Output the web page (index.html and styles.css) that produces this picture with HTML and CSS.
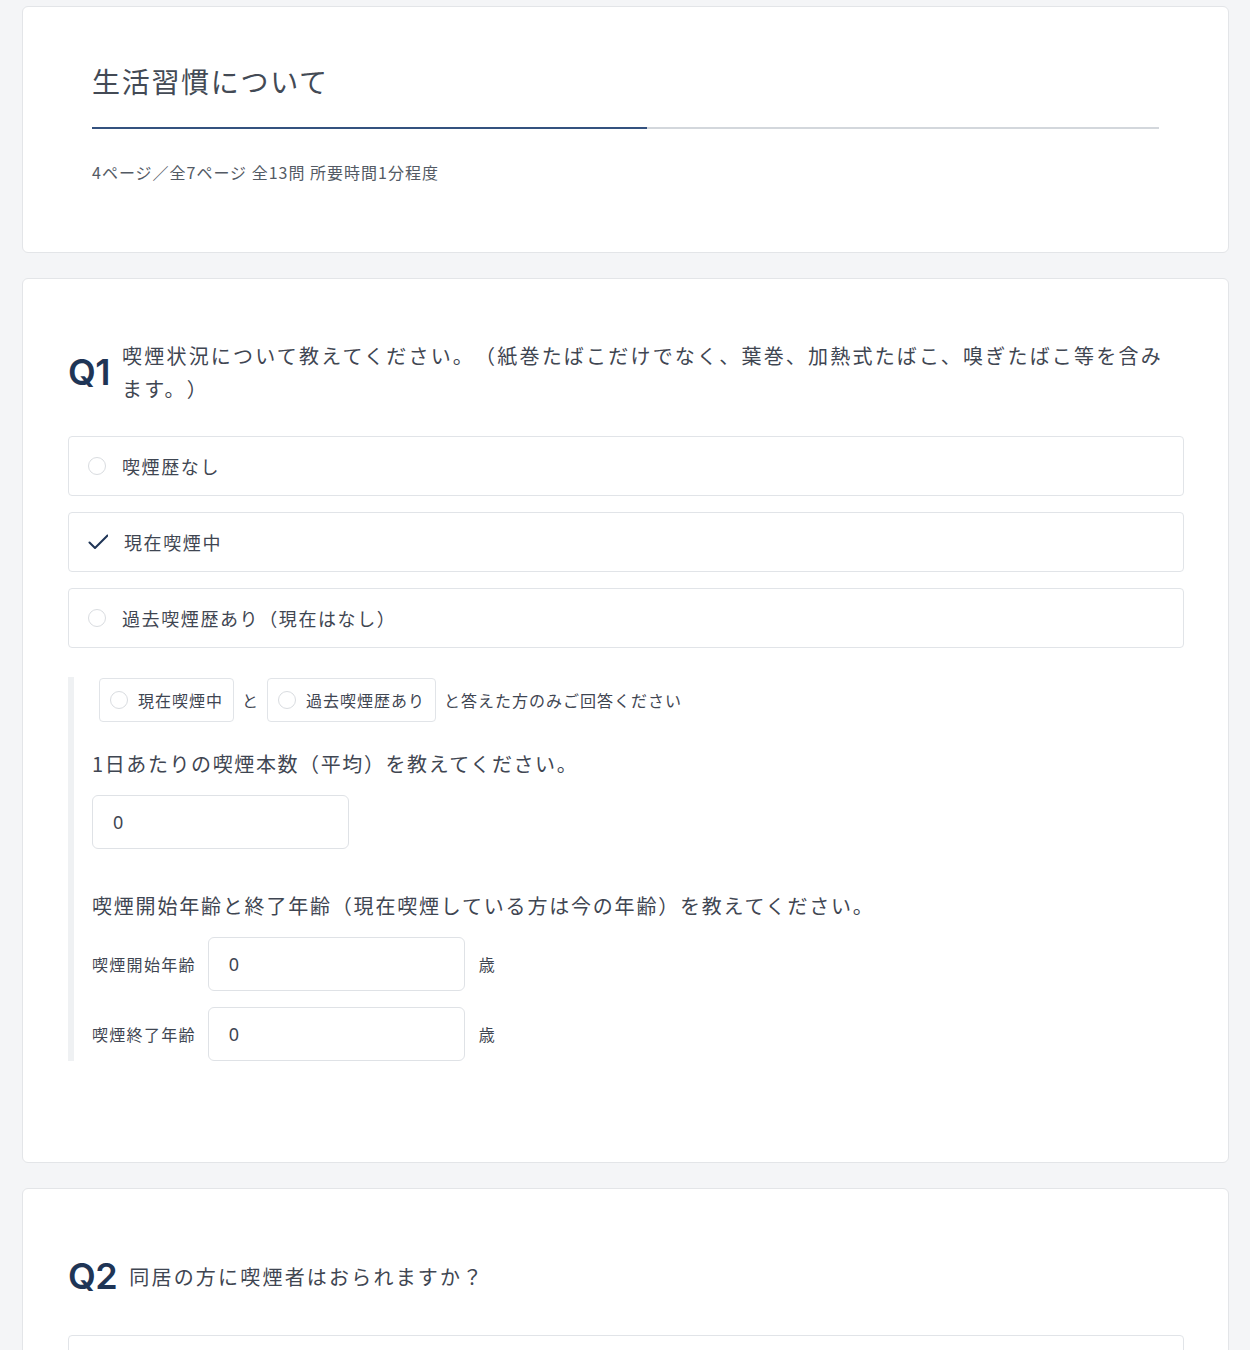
FILE: index.html
```html
<!DOCTYPE html>
<html lang="ja">
<head>
<meta charset="utf-8">
<title>生活習慣について</title>
<link rel="stylesheet" href="styles.css">
</head>
<body>
<main class="page">
  <section class="card card-head">
    <h1 class="title">生活習慣について</h1>
    <div class="progress"><div class="progress-fill" style="width: 52%"></div></div>
    <p class="meta">4ページ／全7ページ 全13問 所要時間1分程度</p>
  </section>

  <section class="card card-q">
    <div class="q-head">
      <span class="q-num">Q1</span>
      <p class="q-text">喫煙状況について教えてください。（紙巻たばこだけでなく、葉巻、加熱式たばこ、嗅ぎたばこ等を含みます。）</p>
    </div>
    <div class="options">
      <div class="option"><span class="radio"></span><span class="opt-label">喫煙歴なし</span></div>
      <div class="option"><svg class="check" viewBox="0 0 20 20" width="20" height="20"><path d="M1.5 10.5 L7 16 L19.5 3.5" fill="none" stroke="#1f3556" stroke-width="2" stroke-linecap="round" stroke-linejoin="round"/></svg><span class="opt-label">現在喫煙中</span></div>
      <div class="option"><span class="radio"></span><span class="opt-label">過去喫煙歴あり（現在はなし）</span></div>
    </div>

    <div class="sub">
      <div class="cond">
        <span class="chip"><span class="radio radio-sm"></span>現在喫煙中</span>
        <span class="cond-text">と</span>
        <span class="chip"><span class="radio radio-sm"></span>過去喫煙歴あり</span>
        <span class="cond-text">と答えた方のみご回答ください</span>
      </div>
      <p class="sub-q">1日あたりの喫煙本数（平均）を教えてください。</p>
      <div class="input">0</div>

      <p class="sub-q sub-q2">喫煙開始年齢と終了年齢（現在喫煙している方は今の年齢）を教えてください。</p>
      <div class="rows">
        <div class="row"><span class="row-label">喫煙開始年齢</span><div class="input">0</div><span class="unit">歳</span></div>
        <div class="row"><span class="row-label">喫煙終了年齢</span><div class="input">0</div><span class="unit">歳</span></div>
      </div>
    </div>
  </section>

  <section class="card card-q">
    <div class="q-head">
      <span class="q-num">Q2</span>
      <p class="q-text">同居の方に喫煙者はおられますか？</p>
    </div>
    <div class="options">
      <div class="option"><span class="radio"></span></div>
    </div>
  </section>
</main>
</body>
</html>
```
FILE: styles.css
```css
html, body {
  margin: 0;
  padding: 0;
}
body {
  background: #f4f5f7;
  font-family: "Noto Sans CJK JP", "Noto Sans", sans-serif;
  color: #3f4652;
  text-spacing-trim: space-all;
}
.page {
  padding: 6px 21px 40px 22px;
  display: flex;
  flex-direction: column;
  gap: 25px;
}
.card {
  background: #ffffff;
  border: 1px solid #e3e5e8;
  border-radius: 6px;
}
.card-head {
  padding: 53px 69px 68px 69px;
}
.title {
  margin: 0;
  font-size: 28px;
  line-height: 42px;
  font-weight: 400;
  letter-spacing: 1.7px;
  color: #434a55;
}
.progress {
  margin-top: 25px;
  height: 2px;
  background: #d3d7dc;
}
.progress-fill {
  height: 2px;
  background: #34527f;
}
.meta {
  margin: 31px 0 0 0;
  font-size: 16px;
  line-height: 24px;
  letter-spacing: 1px;
  color: #535a64;
}
.card-q {
  padding: 60px 44px 101px 45px;
}
.q-head {
  display: flex;
  align-items: center;
  gap: 12px;
}
.q-num {
  font-family: Inter, "Liberation Sans", sans-serif;
  font-size: 36px;
  line-height: 55px;
  font-weight: 600;
  color: #1f3556;
  letter-spacing: -0.5px;
  flex: none;
}
.q-text {
  margin: 0;
  font-size: 20px;
  line-height: 33px;
  letter-spacing: 2.2px;
  padding-right: 16px;
  color: #3f4652;
}
.options {
  margin-top: 31px;
  display: flex;
  flex-direction: column;
  gap: 16px;
}
.option {
  height: 58px;
  border: 1px solid #e1e4e8;
  border-radius: 4px;
  display: flex;
  align-items: center;
  padding-left: 19px;
}
.radio {
  width: 16px;
  height: 16px;
  border: 1.5px solid #d9dce0;
  border-radius: 50%;
  flex: none;
}
.check {
  flex: none;
  width: 20px;
  height: 20px;
}
.opt-label {
  margin-left: 16px;
  font-size: 18px;
  letter-spacing: 1.6px;
  color: #3f4652;
}
.sub {
  margin-top: 29px;
  border-left: 6px solid #eff1f3;
  padding: 1px 0 0 18px;
}
.cond {
  display: flex;
  align-items: center;
  margin-left: 7px;
  gap: 8px;
}
.chip {
  display: inline-flex;
  align-items: center;
  height: 42px;
  border: 1px solid #e1e4e8;
  border-radius: 4px;
  padding: 0 10px 0 10px;
  font-size: 16px;
  letter-spacing: 1px;
  color: #3f4652;
}
.radio-sm {
  width: 16px;
  height: 16px;
  margin-right: 10px;
}
.cond-text {
  font-size: 16px;
  letter-spacing: 1px;
  color: #3f4652;
}
.sub-q {
  margin: 25px 0 0 0;
  font-size: 20px;
  line-height: 33px;
  letter-spacing: 1.6px;
  color: #3f4652;
}
.sub-q2 {
  margin-top: 40px;
  letter-spacing: 1.8px;
}
.input {
  margin-top: 15px;
  height: 52px;
  border: 1px solid #dfe2e6;
  border-radius: 6px;
  display: flex;
  align-items: center;
  padding-left: 20px;
  box-sizing: content-box;
  width: 235px;
  font-size: 18px;
  color: #3f4652;
  font-family: "Noto Sans", "Noto Sans CJK JP", sans-serif;
}
.rows {
  margin-top: 15px;
  display: flex;
  flex-direction: column;
  gap: 16px;
}
.row {
  display: flex;
  align-items: center;
}
.row .input {
  margin-top: 0;
  margin-left: 12px;
}
.row-label {
  font-size: 16px;
  letter-spacing: 1.3px;
  color: #3f4652;
}
.unit {
  margin-left: 14px;
  font-size: 16px;
  color: #3f4652;
}
```
